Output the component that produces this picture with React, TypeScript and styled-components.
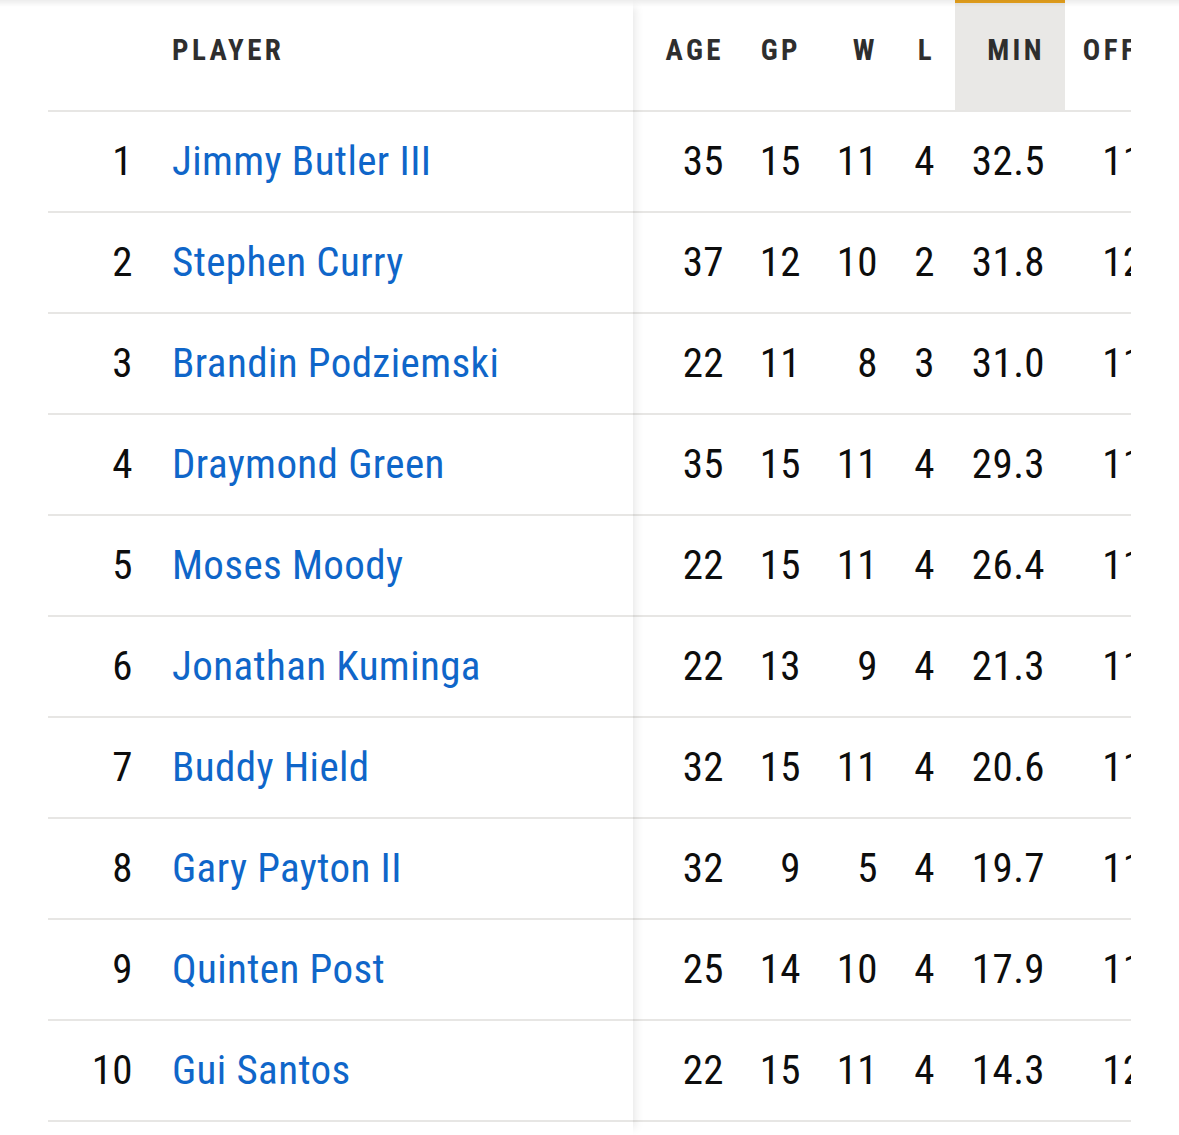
import React from "react";
import styled, { createGlobalStyle } from "styled-components";

const players = [
  { rank: 1, name: "Jimmy Butler III", age: 35, gp: 15, w: 11, l: 4, min: "32.5", off: "117.4" },
  { rank: 2, name: "Stephen Curry", age: 37, gp: 12, w: 10, l: 2, min: "31.8", off: "122.1" },
  { rank: 3, name: "Brandin Podziemski", age: 22, gp: 11, w: 8, l: 3, min: "31.0", off: "114.6" },
  { rank: 4, name: "Draymond Green", age: 35, gp: 15, w: 11, l: 4, min: "29.3", off: "116.2" },
  { rank: 5, name: "Moses Moody", age: 22, gp: 15, w: 11, l: 4, min: "26.4", off: "118.9" },
  { rank: 6, name: "Jonathan Kuminga", age: 22, gp: 13, w: 9, l: 4, min: "21.3", off: "111.7" },
  { rank: 7, name: "Buddy Hield", age: 32, gp: 15, w: 11, l: 4, min: "20.6", off: "115.3" },
  { rank: 8, name: "Gary Payton II", age: 32, gp: 9, w: 5, l: 4, min: "19.7", off: "113.0" },
  { rank: 9, name: "Quinten Post", age: 25, gp: 14, w: 10, l: 4, min: "17.9", off: "116.8" },
  { rank: 10, name: "Gui Santos", age: 22, gp: 15, w: 11, l: 4, min: "14.3", off: "121.5" },
];

const columns = [
  { key: "age", label: "AGE", width: 111 },
  { key: "gp", label: "GP", width: 77 },
  { key: "w", label: "W", width: 77 },
  { key: "l", label: "L", width: 57 },
  { key: "min", label: "MIN", width: 110, sorted: true },
  { key: "off", label: "OFFRTG", width: 151 },
] as const;

const GlobalStyle = createGlobalStyle`
  body {
    margin: 0;
    background: #ffffff;
    font-family: "Roboto Condensed", Roboto, "Liberation Sans", sans-serif;
    font-stretch: 75%;
  }
`;

const TopShade = styled.div`
  position: fixed;
  top: 0;
  left: 0;
  right: 0;
  height: 7px;
  background: linear-gradient(to bottom, rgba(0, 0, 0, 0.07), rgba(0, 0, 0, 0));
  z-index: 5;
  pointer-events: none;
`;

const Page = styled.div`
  display: flex;
  width: 1131px;
  min-height: 100vh;
  padding-left: 48px;
  box-sizing: border-box;
  overflow: hidden;
`;

const FixedPanel = styled.div`
  flex: 0 0 585px;
  position: relative;
  z-index: 2;
  background: #ffffff;
  box-shadow: 9px 0 9px -7px rgba(0, 0, 0, 0.1);
`;

const ScrollPanel = styled.div`
  flex: 1;
  overflow: hidden;
`;

const StatsTable = styled.div`
  width: 583px;
`;

const Row = styled.div<{ $head?: boolean }>`
  display: flex;
  height: ${(p) => (p.$head ? 110 : 99)}px;
  border-bottom: 2px solid #e7e6e4;
`;

const HeadCell = styled.div<{ $w: number; $sorted?: boolean; $left?: boolean }>`
  flex: 0 0 ${(p) => p.$w}px;
  box-sizing: border-box;
  display: flex;
  align-items: center;
  justify-content: ${(p) => (p.$left ? "flex-start" : "flex-end")};
  padding: 0 ${(p) => (p.$left ? 0 : 20)}px 14px ${(p) => (p.$left ? 39 : 0)}px;
  background: ${(p) => (p.$sorted ? "#e9e8e6" : "transparent")};
  border-top: 3px solid ${(p) => (p.$sorted ? "#e8a21d" : "transparent")};
  font-size: 29px;
  font-weight: 700;
  letter-spacing: 3.4px;
  color: #2e2e2e;
  white-space: nowrap;
`;

const RankCell = styled.div`
  flex: 0 0 85px;
  display: flex;
  align-items: center;
  justify-content: flex-end;
  padding-bottom: 2px;
  font-size: 41px;
  letter-spacing: 0.4px;
  color: #0d0d0d;
`;

const NameCell = styled.div`
  flex: 1;
  display: flex;
  align-items: center;
  padding: 0 0 2px 39px;
  font-size: 41px;
  letter-spacing: 0.4px;
`;

const PlayerLink = styled.a`
  color: #0f66c9;
  text-decoration: none;
  white-space: nowrap;
`;

const StatCell = styled.div<{ $w: number }>`
  flex: 0 0 ${(p) => p.$w}px;
  box-sizing: border-box;
  display: flex;
  align-items: center;
  justify-content: flex-end;
  padding: 0 20px 2px 0;
  font-size: 41px;
  letter-spacing: 0.4px;
  color: #0d0d0d;
  white-space: nowrap;
`;

const HeadSpacer = styled.div`
  flex: 0 0 85px;
`;

export default function App() {
  return (
    <>
      <GlobalStyle />
      <TopShade />
      <Page>
        <FixedPanel>
          <Row $head>
            <HeadSpacer />
            <HeadCell $w={500} $left>
              PLAYER
            </HeadCell>
          </Row>
          {players.map((p) => (
            <Row key={p.rank}>
              <RankCell>{p.rank}</RankCell>
              <NameCell>
                <PlayerLink href="#">{p.name}</PlayerLink>
              </NameCell>
            </Row>
          ))}
        </FixedPanel>
        <ScrollPanel>
          <StatsTable>
            <Row $head>
              {columns.map((c) => (
                <HeadCell key={c.key} $w={c.width} $sorted={"sorted" in c}>
                  {c.label}
                </HeadCell>
              ))}
            </Row>
            {players.map((p) => (
              <Row key={p.rank}>
                {columns.map((c) => (
                  <StatCell key={c.key} $w={c.width}>
                    {p[c.key]}
                  </StatCell>
                ))}
              </Row>
            ))}
          </StatsTable>
        </ScrollPanel>
      </Page>
    </>
  );
}
